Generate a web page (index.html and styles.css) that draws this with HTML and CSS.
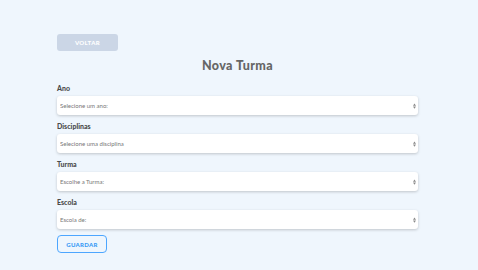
FILE: index.html
```html
<!DOCTYPE html>
<html lang="pt">
<head>
    <meta charset="UTF-8">
    <meta name="viewport" content="width=device-width, initial-scale=1.0">
    <title>Nova Turma</title>
    <link rel="stylesheet" href="styles.css">
</head>
<body>
    <div class="page">
        <button class="btn-back">VOLTAR</button>
        <h2 class="title">Nova Turma</h2>
        <form class="form">
            <label class="label" for="ano">Ano</label>
            <select class="field" id="ano">
                <option>Selecione um ano:</option>
            </select>

            <label class="label" for="disciplina">Disciplinas</label>
            <select class="field" id="disciplina">
                <option>Selecione uma disciplina</option>
            </select>

            <label class="label" for="turma">Turma</label>
            <select class="field" id="turma">
                <option>Escolhe a Turma:</option>
            </select>

            <label class="label" for="escola">Escola</label>
            <select class="field" id="escola">
                <option>Escola de:</option>
            </select>

            <button type="button" class="btn-save">GUARDAR</button>
        </form>
    </div>
</body>
</html>
```

FILE: styles.css
```css
body {
    margin: 0;
    background-color: #EFF6FD;
    font-family: Lato, "Open Sans", sans-serif;
    color: #4a4a4a;
}

.page {
    width: 361px;
    margin-left: 57px;
    padding-top: 34px;
}

.btn-back {
    display: block;
    width: 61px;
    height: 17px;
    background-color: #CBD6E6;
    color: white;
    border: none;
    border-radius: 3px;
    font-family: inherit;
    font-size: 6px;
    font-weight: 900;
    letter-spacing: 0.4px;
    padding: 0;
}

.title {
    margin: 7px 0 0 0;
    height: 16px;
    line-height: 16px;
    text-align: center;
    font-size: 12.5px;
    font-weight: 900;
    color: #666;
    letter-spacing: 0.4px;
}

.form {
    display: flex;
    flex-direction: column;
    margin-top: 9px;
}

.label {
    height: 10px;
    line-height: 10px;
    font-size: 7px;
    font-weight: 900;
    color: #4a4a4a;
    margin-bottom: 3px;
}

.field {
    appearance: none;
    -webkit-appearance: none;
    height: 19px;
    margin-bottom: 6px;
    padding: 0 14px 0 3px;
    border: none;
    border-radius: 3px;
    background-color: white;
    background-image: url("data:image/svg+xml;utf8,<svg xmlns='http://www.w3.org/2000/svg' width='3' height='6' viewBox='0 0 4 8'><path d='M0 3.5 L2 0.5 L4 3.5 Z M0 4.5 L2 7.5 L4 4.5 Z' fill='%23888'/></svg>");
    background-repeat: no-repeat;
    background-position: right 2px center;
    box-shadow: 0 1px 3px rgba(0, 0, 0, 0.2);
    font-family: inherit;
    font-size: 6px;
    color: #777;
    outline: none;
}

.btn-save {
    width: 50px;
    height: 18px;
    padding: 0;
    background: transparent;
    border: 1px solid #4DA6FF;
    border-radius: 4px;
    color: #3A9BF5;
    font-family: inherit;
    font-size: 6px;
    font-weight: 900;
    letter-spacing: 0.3px;
}
```
